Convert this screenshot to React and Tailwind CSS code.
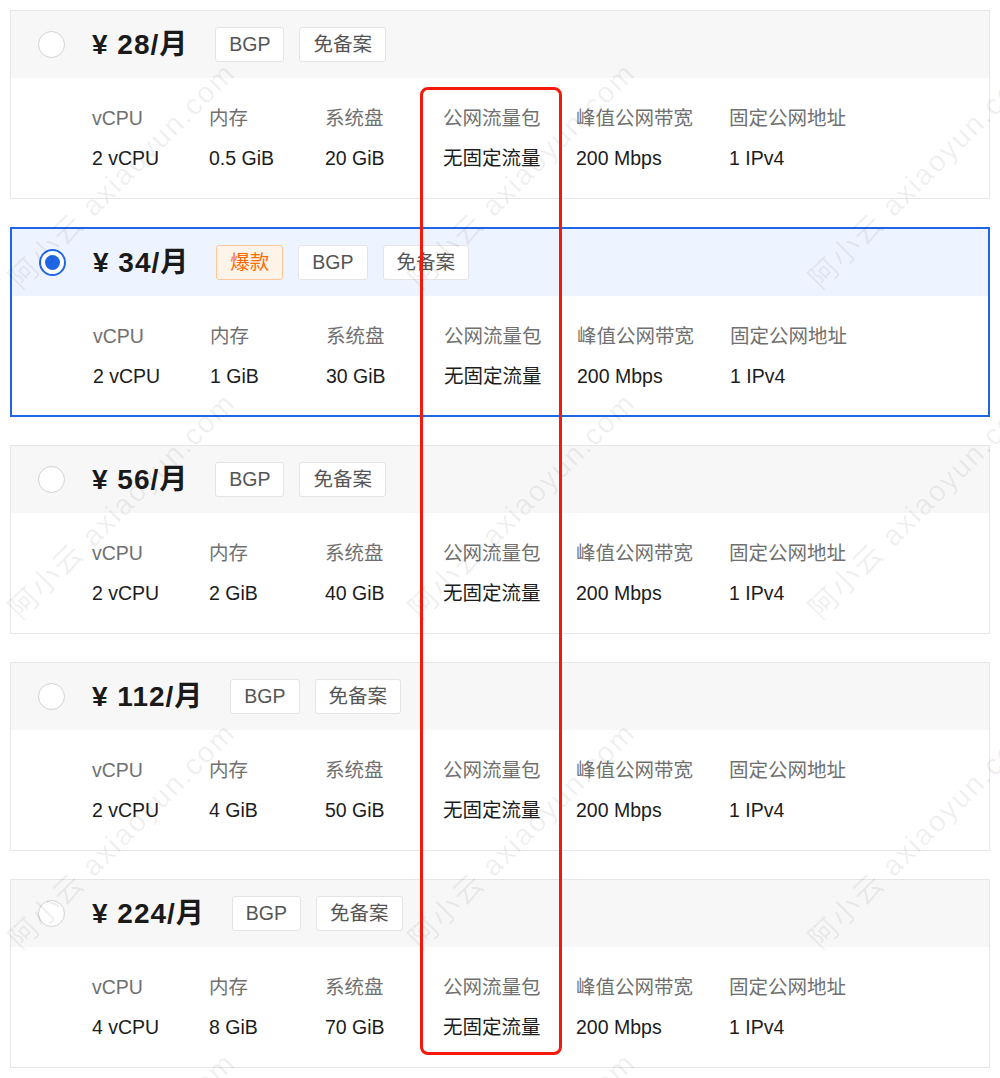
const plans = [
  { price: "28", cpu: "2 vCPU", mem: "0.5 GiB", disk: "20 GiB" },
  { price: "34", cpu: "2 vCPU", mem: "1 GiB", disk: "30 GiB", hot: true, selected: true },
  { price: "56", cpu: "2 vCPU", mem: "2 GiB", disk: "40 GiB" },
  { price: "112", cpu: "2 vCPU", mem: "4 GiB", disk: "50 GiB" },
  { price: "224", cpu: "4 vCPU", mem: "8 GiB", disk: "70 GiB" },
];

const font = { fontFamily: '"Liberation Sans", "Noto Sans CJK SC", sans-serif' };

const Tag = ({ children, hot }) => (
  <span
    className={
      hot
        ? "h-[35px] px-[13px] flex items-center rounded-[3px] border border-[#ffc79a] bg-[#fff4ea] text-[#ff6a00] text-[19.5px]"
        : "h-[35px] px-[13px] flex items-center rounded-[3px] border border-[#e4e4e4] bg-white text-[#555] text-[19.5px]"
    }
  >
    {children}
  </span>
);

const Spec = ({ label, value, w }) => (
  <div className={`${w} flex flex-col gap-[16px] shrink-0`}>
    <span className="leading-[24px] text-[19.5px] text-[#707070]">{label}</span>
    <span className="leading-[24px] text-[19.5px] text-[#1c1c1c]">{value}</span>
  </div>
);

const PlanCard = ({ plan }) => {
  const sel = plan.selected;
  return (
    <div
      className={
        sel
          ? "h-[190px] border-2 border-[#1f66e5] bg-white flex flex-col"
          : "h-[189px] border border-[#e6e6e6] bg-white flex flex-col"
      }
    >
      <div
        className={`h-[67px] shrink-0 flex items-center pl-[27px] ${
          sel ? "bg-[#eef4ff]" : "bg-[#f7f7f7]"
        }`}
      >
        {sel ? (
          <span className="w-[27px] h-[27px] rounded-full border-2 border-[#1f66e5] bg-white flex items-center justify-center">
            <span className="w-[15px] h-[15px] rounded-full bg-[#1f66e5]" />
          </span>
        ) : (
          <span className="w-[27px] h-[27px] rounded-full border border-[#d2d2d2] bg-white" />
        )}
        <span className="ml-[27px] text-[28px] font-bold text-[#1a1a1a] tracking-[1px]">
          ¥ {plan.price}/月
        </span>
        <div className="ml-[27px] flex gap-[15px]">
          {plan.hot && <Tag hot>爆款</Tag>}
          <Tag>BGP</Tag>
          <Tag>免备案</Tag>
        </div>
      </div>
      <div className="flex pl-[81px] pt-[28px]">
        <Spec label="vCPU" value={plan.cpu} w="w-[117px]" />
        <Spec label="内存" value={plan.mem} w="w-[116px]" />
        <Spec label="系统盘" value={plan.disk} w="w-[118px]" />
        <Spec label="公网流量包" value="无固定流量" w="w-[133px]" />
        <Spec label="峰值公网带宽" value="200 Mbps" w="w-[153px]" />
        <Spec label="固定公网地址" value="1 IPv4" w="w-[160px]" />
      </div>
    </div>
  );
};

const marks = [];
[295, 625, 955, 1285].forEach((y) =>
  [25, 425, 825].forEach((x) => marks.push({ x, y }))
);

export default function App() {
  return (
    <div className="relative w-[1000px] h-[1078px] bg-white overflow-hidden" style={font}>
      <div className="flex flex-col gap-[28px] pt-[10px] px-[10px]">
        {plans.map((p) => (
          <PlanCard key={p.price} plan={p} />
        ))}
      </div>

      {/* watermark */}
      {marks.map((m, i) => (
        <span
          key={i}
          className="absolute pointer-events-none whitespace-nowrap text-[29px] tracking-[2px] text-black/[0.07] origin-bottom-left -rotate-45 leading-[32px]"
          style={{ left: m.x, top: m.y - 32 }}
        >
          阿小云 axiaoyun.com
        </span>
      ))}

      {/* highlight box */}
      <div className="absolute left-[420px] top-[87px] w-[142px] h-[968px] border-[3px] border-[#f5190c] rounded-[8px] pointer-events-none" />
    </div>
  );
}
